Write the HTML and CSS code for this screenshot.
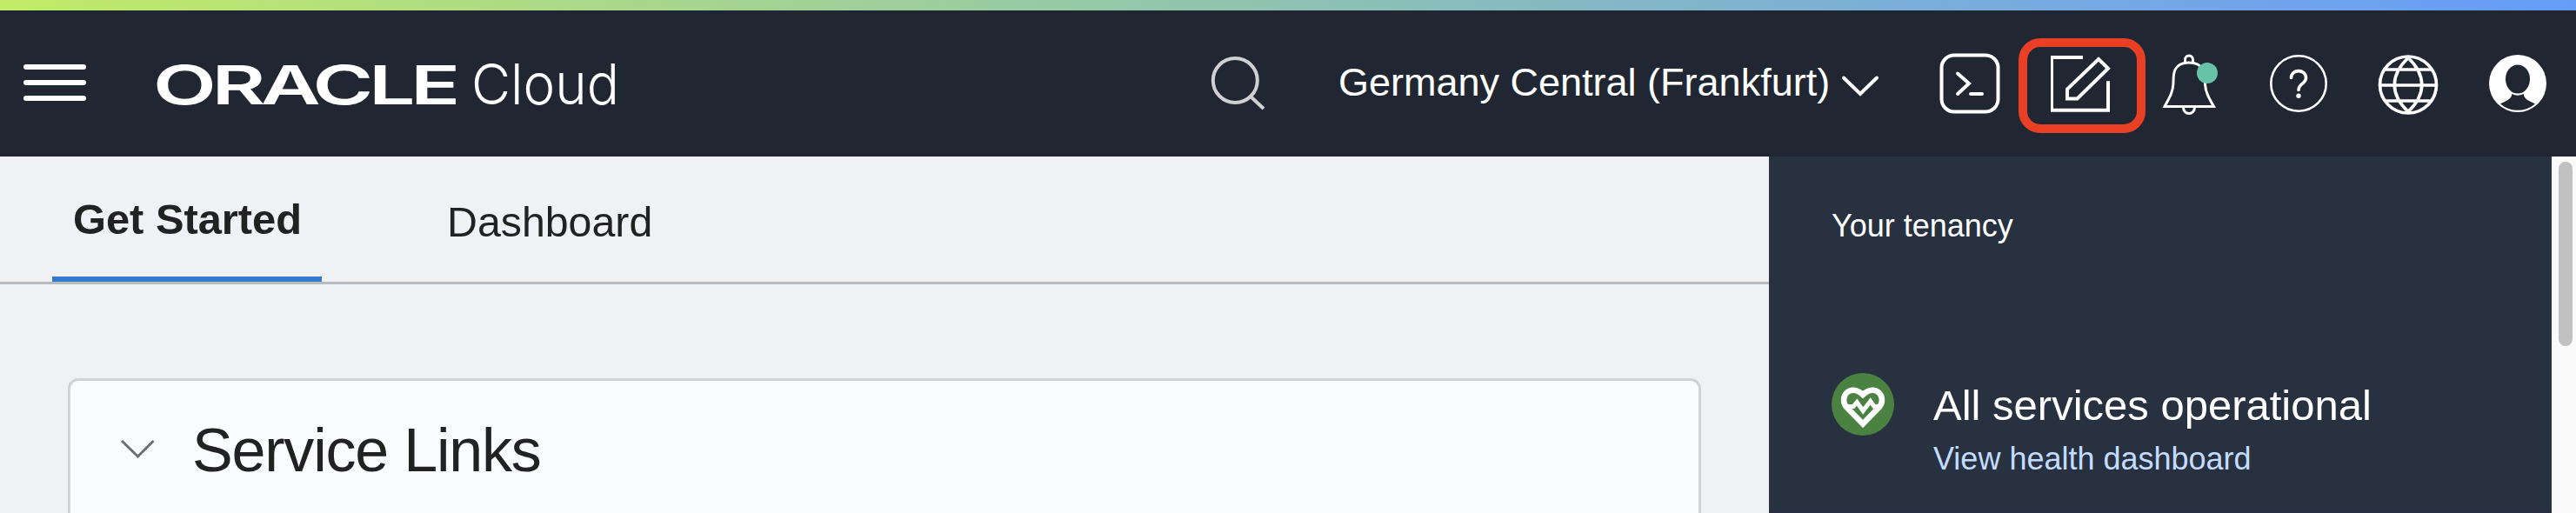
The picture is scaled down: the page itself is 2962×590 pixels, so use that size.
FILE: index.html
```html
<!DOCTYPE html>
<html lang="en">
<head>
<meta charset="utf-8">
<title>Oracle Cloud</title>
<link rel="stylesheet" href="styles.css">
</head>
<body>
<div class="accent"></div>
<header class="topbar">
  <button class="menu" aria-label="Menu"><span></span><span></span><span></span></button>
  <svg class="logo" width="544" height="92" viewBox="173 50 544 92">
    <text class="wordmark" x="176" y="120" textLength="348" lengthAdjust="spacingAndGlyphs">ORACLE</text>
    <text class="product" x="542" y="120" textLength="170" lengthAdjust="spacingAndGlyphs">Cloud</text>
  </svg>
  <svg class="search" width="72" height="72" viewBox="1389 60 72 72"><circle cx="1420.3" cy="92.5" r="25.5"/><path d="M1438 111l15 14"/></svg>
  <div class="region">Germany Central (Frankfurt)</div>
  <svg class="icon region-arrow" width="46" height="72" viewBox="2116 60 46 72"><path d="M2120 89.500l19 18.500 19-18.500"/></svg>
  <svg class="icon terminal" width="72" height="72" viewBox="2229 60 72 72"><rect x="2232.500" y="63.500" width="65" height="65" rx="14.500"/><path d="M2251 84.500l13 11.500-13 12M2266 108h13"/></svg>
  <button class="edit" aria-label="Edit">
    <svg class="icon" width="72" height="72" viewBox="2358 62.500 72 72"><path d="M2395 65.500h-36v60.800h65v-33.500M2413 67.500l11 10.700-35.500 34.800h-11.500v-11z"/></svg>
  </button>
  <svg class="icon bell" width="80" height="72" viewBox="2481 60 80 72"><path d="M2489 122.500h56.500c-5-9-9.500-16-10-25.500-.3-10 .5-25-18.500-25s-18 15-18 24c-.5 10.500-5 17-10 26.500zM2512.500 72v-3.500a4.500 4.500 0 0 1 9 0V72M2510.500 123.500a6.500 7 0 0 0 13 0"/><circle class="dot" cx="2538" cy="84" r="12"/></svg>
  <svg class="icon help" width="72" height="72" viewBox="2607 60 72 72"><circle cx="2643" cy="96" r="31.700"/><path d="M2634.500 89.500c0-10.500 17-10.500 17 0 0 6.500-8.500 7-8.500 14"/><circle class="point" cx="2643" cy="110.300" r="2.700"/></svg>
  <svg class="icon globe" width="72" height="72" viewBox="2733 60 72 72"><circle cx="2769" cy="97.500" r="32.500"/><path d="M2743 80h52M2737 98h64M2743 116h52M2769 66.500c-21 20-21 42 0 62c21-20 21-42 0-62"/></svg>
  <svg class="user" width="72" height="72" viewBox="2859 60 72 72"><circle cx="2895" cy="96" r="33"/><path d="M2875 119.500c6-3.500 13-5 13.300-11.500q6.700 3.500 13.400 0c.3 6.500 7.300 8 13.300 11.500a31 31 0 0 1-40 0z"/><ellipse cx="2895" cy="91" rx="14" ry="16.500"/></svg>
</header>
<div class="body">
  <main class="content">
    <nav class="tabs">
      <a class="tab tab-active">Get Started</a>
      <a class="tab">Dashboard</a>
    </nav>
    <section class="card">
      <svg class="chevron" width="44" height="30" viewBox="136 502 44 30"><path d="M140 507l18.500 18 18-18"/></svg>
      <h1 class="card-title">Service Links</h1>
    </section>
  </main>
  <aside class="tenancy">
    <h2 class="tenancy-title">Your tenancy</h2>
    <div class="status">
      <svg class="health" width="72" height="72" viewBox="2106 429 72 72"><circle cx="2142" cy="465" r="36"/><path class="heart" d="M2142 487.500l-19-19.500c-9-11 4-28 19-14 15-14 28 3 19 14z"/><path class="pulse" d="M2122 467.500h9l4.200-5 7 10 8.500-11 4.300 6h7"/></svg>
      <div class="status-text">
        <div class="status-title">All services operational</div>
        <a class="status-link">View health dashboard</a>
      </div>
    </div>
  </aside>
  <div class="scrollbar"><div class="thumb"></div></div>
</div>
</body>
</html>
```

FILE: styles.css
```css
* { box-sizing: border-box; }
body { margin: 0; height: 590px; overflow: hidden; background: #eff1f5; font-family: "Liberation Sans", Arial, sans-serif; color: #222; }
button { border: 0; padding: 0; background: none; }
svg { flex: none; display: block; }
.accent { height: 12px; background: linear-gradient(90deg, #c1eb67 0%, #a8d78c 25%, #89bfb8 54%, #7aacdc 76%, #659df9 100%); }
.topbar { height: 168px; background: #202732; display: flex; align-items: center; padding-left: 27px; }
.menu { width: 72px; height: 42px; display: flex; flex-direction: column; justify-content: space-between; margin-top: -2px; }
.menu span { height: 6px; border-radius: 3px; background: #fff; }
.logo { margin-left: 74px; overflow: visible; }
.logo text { fill: #fff; }
.wordmark { font: 600 61.500px Inter, sans-serif; letter-spacing: -3.500px; }
.product { font: 300 65px Inter, sans-serif; }
.search { margin-left: 672px; fill: none; stroke: #cfd0d2; stroke-width: 4; }
.region { width: 577px; margin-left: 78px; margin-top: -3px; font-size: 45px; line-height: 60px; color: #fff; white-space: nowrap; }
.icon { fill: none; stroke: #fff; stroke-width: 4; }
.region-arrow { stroke-linecap: round; }
.terminal { margin-left: 67px; stroke-linecap: round; }
.edit { width: 146px; height: 109px; margin: 5px 0 0 20px; border: 10px solid #e83f25; border-radius: 25px; display: flex; align-items: center; justify-content: center; }
.bell { margin-left: 14px; stroke-width: 3; }
.dot { fill: #67c2a8; stroke: none; }
.help { margin-left: 46px; stroke-width: 2.600; stroke-linecap: round; }
.help path { stroke-width: 3.600; }
.point { fill: #fff; stroke: none; }
.globe { margin-left: 54px; stroke-width: 3.700; }
.user { margin-left: 54px; fill: #202732; }
.user circle { fill: #fff; }
.body { height: 410px; display: flex; overflow: hidden; }
.content { width: 2034px; }
.tabs { height: 147px; border-bottom: 3px solid #b4bbc1; padding-left: 60px; display: flex; }
.tab { height: 144px; font-size: 48.300px; line-height: 151px; white-space: nowrap; }
.tab-active { width: 310px; margin-right: 144px; padding-left: 24px; border-bottom: 6px solid #357ac8; font-size: 48.800px; line-height: 145px; font-weight: 700; }
.card { height: 155px; width: 1878px; margin: 108px 0 0 78px; border: 3px solid #d0d2d6; border-bottom: 0; border-radius: 12px 12px 0 0; background: #fafbff; display: flex; padding-left: 55px; }
.chevron { margin-top: 64px; fill: none; stroke: #6e6e70; stroke-width: 3; }
.card-title { margin: 40px 0 0 41px; font-size: 70px; line-height: 80px; font-weight: 400; letter-spacing: -1.200px; white-space: nowrap; }
.tenancy { width: 900px; background: #283140; border-bottom: 1px solid #2b2841; padding: 59px 0 0 72px; color: #fff; }
.tenancy-title { margin: 0; font-size: 36px; line-height: 42px; font-weight: 400; }
.status { display: flex; margin-top: 148px; }
.health { fill: #4b8141; }
.heart { fill: none; stroke: #fff; stroke-width: 6.500; }
.pulse { fill: none; stroke: #fff; stroke-width: 5; }
.status-text { margin-left: 45px; white-space: nowrap; }
.status-title { font-size: 49px; line-height: 60px; margin-top: 7px; }
.status-link { display: block; margin-top: 12px; font-size: 36px; line-height: 40px; color: #c3dcff; }
.scrollbar { width: 28px; background: #fafafa; padding: 6px 0 0 8px; }
.thumb { width: 16px; height: 212px; border-radius: 8px; background: #c1c1c1; }
```
